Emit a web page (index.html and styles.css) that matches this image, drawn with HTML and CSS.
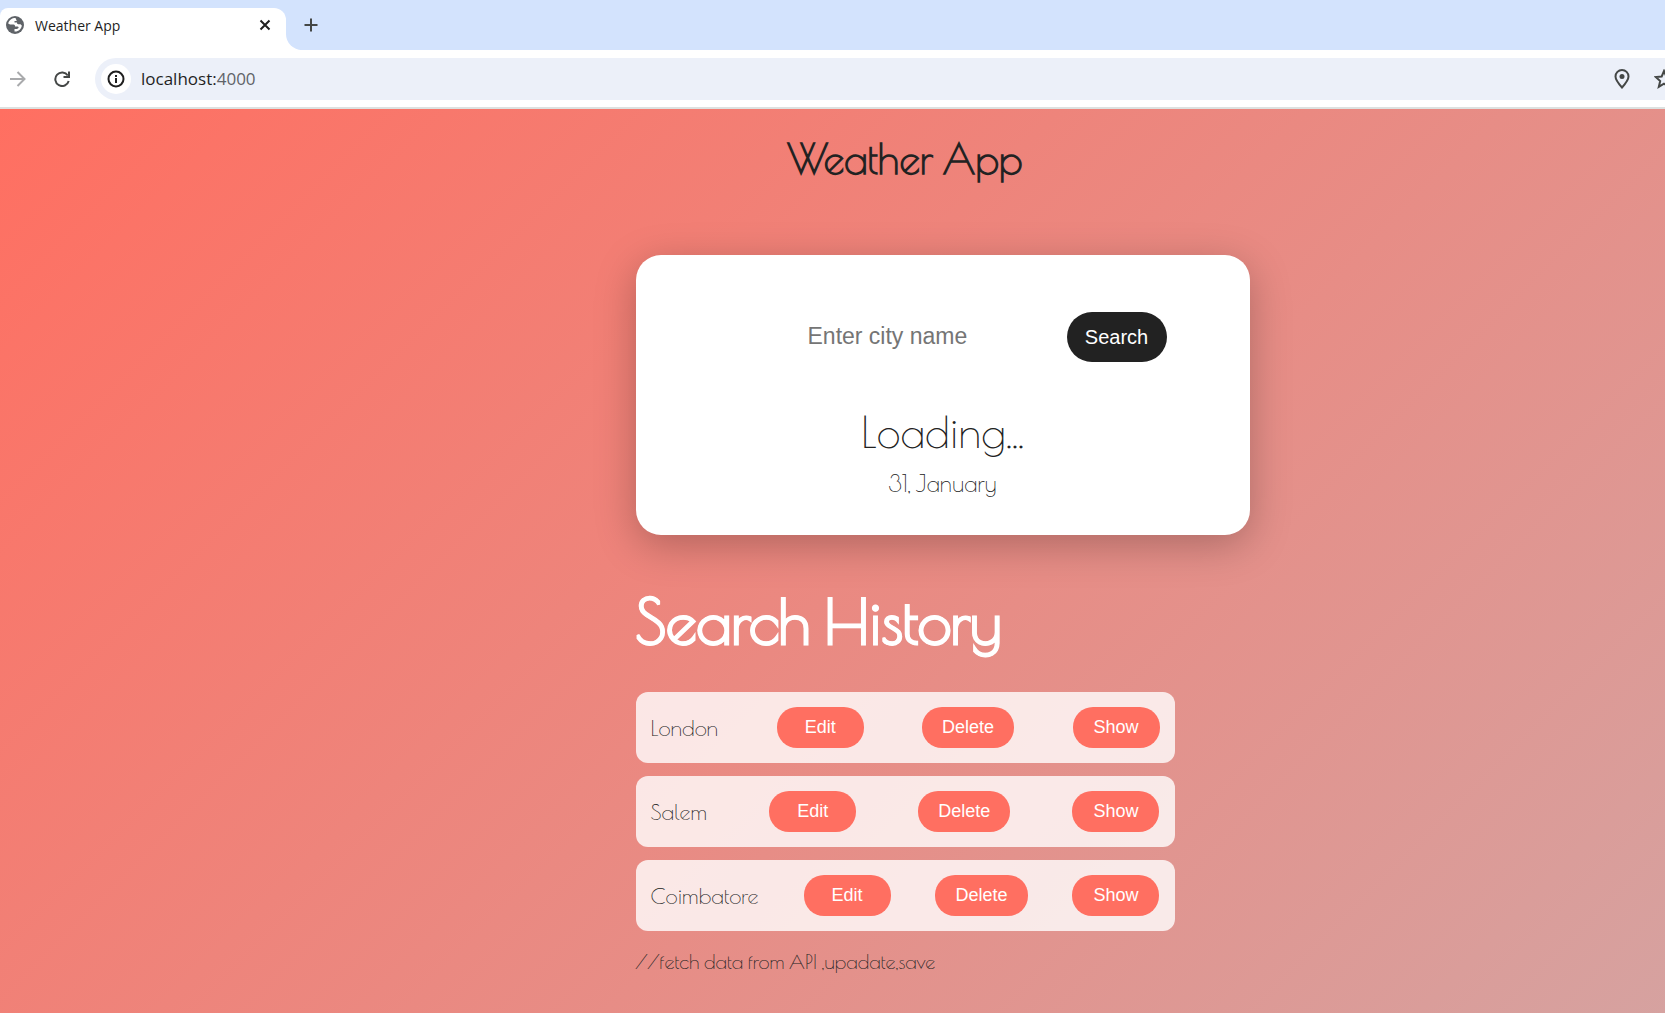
FILE: index.html
```html
<!DOCTYPE html>
<html lang="en">
<head>
<meta charset="utf-8">
<title>Weather App</title>
<link rel="stylesheet" href="styles.css">
</head>
<body>
<header class="browser">
  <div class="tabstrip">
    <div class="tab">
      <svg class="favicon" viewBox="0 0 18 18" width="18" height="18" aria-hidden="true"><circle cx="9" cy="9" r="9" fill="#5f6368"/><path d="M9.500 2C6 2 3 4 2.200 7.500L4 8.500h3.500c1.200 0 1.500.8 1.500 2h2.500c1 0 1.300.8 1 1.500l-1.500 1H8.500v2.500c4 .3 7-2.500 7.300-6l-1.300-1.300h-2.300c-.8 0-1.200-.7-1.200-1.700H8.500V5h2.300z" fill="#fff"/></svg>
      <span class="tab-title">Weather App</span>
      <button class="icon-btn" aria-label="Close tab"><svg viewBox="0 0 12 12" width="12" height="12"><path d="M1.500 1.500l9 9m0-9l-9 9" stroke="#1f1f1f" stroke-width="2" fill="none"/></svg></button>
    </div>
    <button class="icon-btn new-tab" aria-label="New tab"><svg viewBox="0 0 14 14" width="14" height="14"><path d="M7 .5v13M.5 7h13" stroke="#444746" stroke-width="2" fill="none"/></svg></button>
  </div>
  <div class="toolbar">
    <button class="icon-btn" aria-label="Forward" disabled><svg viewBox="0 0 16 16" width="16" height="16"><path d="M0 8h14M7.500 1l7 7-7 7" stroke="#a9aaac" stroke-width="2" fill="none"/></svg></button>
    <button class="icon-btn" aria-label="Reload"><svg viewBox="0 0 16 16" width="16" height="16"><path d="M13.800 4.500A6.800 6.800 0 1 0 14.700 10M15 .5V6H9.500" stroke="#444746" stroke-width="2" fill="none"/></svg></button>
    <div class="address">
      <button class="icon-btn site-info" aria-label="Site information"><svg viewBox="0 0 18 18" width="18" height="18"><circle cx="9" cy="9" r="7.500" stroke="#1f1f1f" stroke-width="2" fill="none"/><path d="M9 8v5M9 5v2" stroke="#1f1f1f" stroke-width="2"/></svg></button>
      <span class="url">localhost:<span class="port">4000</span></span>
      <button class="icon-btn" aria-label="Location"><svg viewBox="0 0 16 20" width="16" height="20"><path d="M8 18.500C4 14 1.500 10.800 1.500 7.500a6.500 6.500 0 0 1 13 0c0 3.300-2.500 6.500-6.500 11z" stroke="#444746" stroke-width="2" fill="none"/><circle cx="8" cy="7.500" r="2.500" fill="#444746"/></svg></button>
      <button class="icon-btn" aria-label="Bookmark"><svg viewBox="0 0 20 20" width="20" height="20"><path d="M10 2l2.300 5.500 6 .5-4.500 4 1.400 5.800L10 14.700l-5.200 3.100L6.200 12 1.700 8l6-.5z" stroke="#444746" stroke-width="2" fill="none"/></svg></button>
    </div>
  </div>
</header>
<main class="page">
  <h1 class="title">Weather App</h1>
  <div class="content">
    <section class="card">
      <form class="search" onsubmit="return false">
        <input class="city" type="text" placeholder="Enter city name" aria-label="City name">
        <button class="search-btn">Search</button>
      </form>
      <h2 class="status">Loading...</h2>
      <p class="date">31, January</p>
    </section>
    <h2 class="history-title">Search History</h2>
    <ul class="history">
      <li class="entry"><span class="name">London</span><button class="pill">Edit</button><button class="pill">Delete</button><button class="pill">Show</button></li>
      <li class="entry"><span class="name">Salem</span><button class="pill">Edit</button><button class="pill">Delete</button><button class="pill">Show</button></li>
      <li class="entry"><span class="name">Coimbatore</span><button class="pill">Edit</button><button class="pill">Delete</button><button class="pill">Show</button></li>
    </ul>
    <p class="note">//fetch data from API ,upadate,save</p>
  </div>
</main>
</body>
</html>
```
FILE: styles.css
```css
* { box-sizing: border-box; }

body {
  margin: 0;
  min-height: 100vh;
  display: flex;
  flex-direction: column;
  overflow-x: hidden;
  font-family: "Poiret One", Lato, sans-serif;
  color: #222;
}

h1, h2, p, ul { margin: 0; padding: 0; }
button, input { font-family: Arial, "Liberation Sans", sans-serif; border: 0; }

/* Browser chrome */
.browser { font-family: "Segoe UI", "Open Sans", sans-serif; color: #1f1f1f; }
.tabstrip {
  display: flex;
  align-items: center;
  height: 50px;
  background: linear-gradient(#fff, #fff) 0 100% / 300px 16px no-repeat, #d3e3fd;
}
.tab {
  display: flex;
  align-items: center;
  gap: 11px;
  width: 286px;
  height: 42px;
  margin-top: 8px;
  padding: 0 15px 8px 6px;
  background: #fff;
  border-radius: 8px 12px 0 0;
}
.tab-title { flex: 1; padding-top: 2px; font-size: 14px; line-height: 20px; }
.icon-btn { display: flex; padding: 0; background: none; flex: none; }
.new-tab {
  align-self: stretch;
  flex: 1;
  align-items: center;
  padding-left: 18px;
  background: #d3e3fd;
  border-bottom-left-radius: 16px;
}
.toolbar {
  display: flex;
  align-items: center;
  gap: 28px;
  height: 59px;
  padding-left: 10px;
  background: #fff;
  border-bottom: 2px solid #dde1e0;
}
.address {
  flex: 1;
  display: flex;
  align-items: center;
  gap: 24px;
  height: 42px;
  margin-left: -3px;
  margin-right: -9px;
  padding-left: 6px;
  background: #ecf0f9;
  border-radius: 21px 0 0 21px;
}
.site-info {
  width: 30px;
  height: 30px;
  align-items: center;
  justify-content: center;
  background: #fff;
  border-radius: 50%;
}
.url { flex: 1; margin-left: -14px; padding-top: 1px; font-size: 17px; line-height: 24px; }
.port { color: #5f6368; }

/* Weather page */
.page {
  flex: 1;
  padding: 24px 0 40px 145px;
  background: linear-gradient(135deg, #ff6f61, #d6a2a0);
}
.title {
  font-size: 41px;
  line-height: 52px;
  font-weight: 700;
  text-align: center;
}
.content { width: 539px; max-width: 100%; margin: 70px auto 0; }
.card {
  width: 614px;
  padding: 57px 83px 35px;
  background: #fff;
  border-radius: 25px;
  box-shadow: 0 10px 40px rgba(0, 0, 0, 0.25);
  text-align: center;
}
.search { display: flex; justify-content: flex-end; gap: 24px; }
.city { width: 236px; height: 50px; padding: 0 1px 2px; background: none; font-size: 23px; outline: 0; }
.city::placeholder { color: #757575; }
.search-btn {
  width: 100px;
  height: 50px;
  border-radius: 25px;
  background: #222;
  color: #fff;
  font-size: 20px;
}
.status { margin-top: 42px; font-size: 43px; line-height: 56px; font-weight: 400; }
.date { margin-top: 8px; font-size: 23px; line-height: 32px; }
.history-title {
  margin-top: 46px;
  font-size: 61px;
  line-height: 80px;
  font-weight: 700;
  color: #fff;
  -webkit-text-stroke: 1px #fff;
  white-space: nowrap;
}
.history { display: grid; gap: 13px; margin-top: 31px; list-style: none; }
.entry {
  display: flex;
  align-items: center;
  justify-content: space-between;
  padding: 15px;
  background: rgba(255, 255, 255, 0.8);
  border-radius: 12px;
}
.name { font-size: 22px; line-height: 32px; }
.pill {
  min-width: 87px;
  height: 41px;
  padding: 0 20px;
  border-radius: 20px;
  background: #ff6f61;
  color: #fff;
  font-size: 18px;
}
.note { margin-top: 17px; font-size: 20px; line-height: 28px; }
```
